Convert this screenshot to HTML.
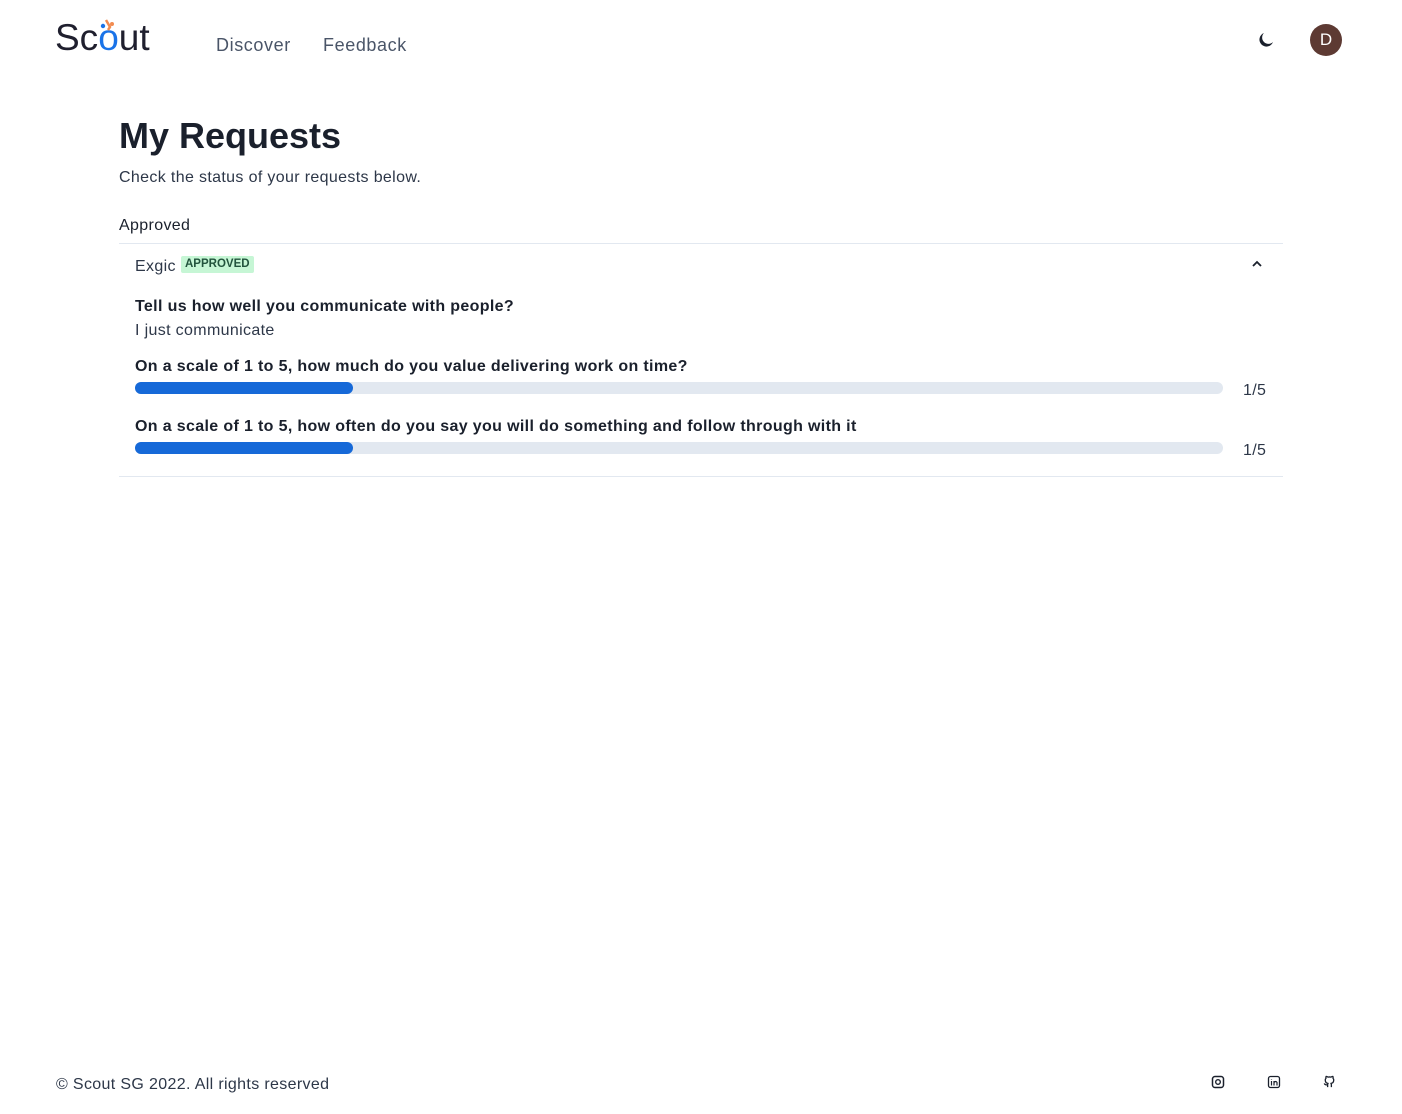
<!DOCTYPE html>
<html><head><meta charset="utf-8"><style>
*{box-sizing:border-box;margin:0;padding:0}
body{width:1402px;height:1114px;background:#fff;font-family:"Liberation Sans",sans-serif;color:#1a202c;position:relative;overflow:hidden;letter-spacing:0.35px}
.abs{position:absolute}
.nav{font-size:18px;color:#4a5568;top:35px;letter-spacing:0.6px}
.q{font-weight:bold;font-size:16px;color:#1a202c;left:135px;letter-spacing:0.35px}
.bar{left:135px;width:1088px;height:12px;background:#e2e8f0;border-radius:6px}
.bar div{width:218px;height:12px;background:#1669d8;border-radius:6px}
.val{left:1243px;font-size:16px;color:#2d3748}
</style></head><body>
<div class="abs" style="left:55px;top:17px;font-size:37px;color:#1f1f2e;letter-spacing:0px">Sc<span style="color:#1a73e8">o</span>ut</div>
<svg class="abs" style="left:96px;top:18px" width="26" height="26" viewBox="0 0 26 26"><circle cx="7" cy="8" r="2.2" fill="#1a73e8"/><path d="M10 2 L14 9 L12 12" stroke="#f28b50" stroke-width="2.5" fill="none"/><circle cx="16" cy="6" r="2" fill="#f28b50"/></svg>
<div class="abs nav" style="left:216px">Discover</div>
<div class="abs nav" style="left:323px">Feedback</div>
<svg class="abs" style="left:1257px;top:31px" width="18" height="18" viewBox="0 0 18 18"><path d="M7 2 A7 7 0 1 0 16 11 A6 6 0 0 1 7 2Z" fill="#1a202c"/></svg>
<div class="abs" style="left:1310px;top:24px;width:32px;height:32px;border-radius:50%;background:#5d3a33;color:#fff;font-size:17px;text-align:center;line-height:32px;letter-spacing:0">D</div>
<div class="abs" style="left:119px;top:115px;font-size:36px;font-weight:bold;color:#1a202c;letter-spacing:0">My Requests</div>
<div class="abs" style="left:119px;top:169px;font-size:16px;color:#2d3748">Check the status of your requests below.</div>
<div class="abs" style="left:119px;top:217px;font-size:16px;color:#1a202c">Approved</div>
<div class="abs" style="left:119px;top:243px;width:1164px;height:1px;background:#e2e8f0"></div>
<div class="abs" style="left:135px;top:258px;font-size:16px;color:#2d3748">Exgic</div>
<div class="abs" style="left:181px;top:256px;height:17px;padding:0 4px;background:#c6f6d5;color:#22543d;font-size:11.5px;font-weight:bold;line-height:17px;border-radius:2px;letter-spacing:0">APPROVED</div>
<svg class="abs" style="left:1251px;top:259px" width="12" height="10" viewBox="0 0 12 10"><path d="M2 7 L6 3 L10 7" stroke="#1a202c" stroke-width="1.8" fill="none"/></svg>
<div class="abs q" style="top:298px">Tell us how well you communicate with people?</div>
<div class="abs" style="left:135px;top:322px;font-size:16px;color:#2d3748">I just communicate</div>
<div class="abs q" style="top:358px">On a scale of 1 to 5, how much do you value delivering work on time?</div>
<div class="abs bar" style="top:382px"><div></div></div>
<div class="abs val" style="top:382px">1/5</div>
<div class="abs q" style="top:418px">On a scale of 1 to 5, how often do you say you will do something and follow through with it</div>
<div class="abs bar" style="top:442px"><div></div></div>
<div class="abs val" style="top:442px">1/5</div>
<div class="abs" style="left:119px;top:476px;width:1164px;height:1px;background:#e2e8f0"></div>
<div class="abs" style="left:56px;top:1076px;font-size:16px;color:#2d3748">© Scout SG 2022. All rights reserved</div>
<svg class="abs" style="left:1211px;top:1075px" width="14" height="14" viewBox="0 0 14 14"><rect x="1.5" y="1.5" width="11" height="11" rx="2.5" stroke="#1a202c" stroke-width="1.5" fill="none"/><circle cx="7" cy="7" r="2.3" stroke="#1a202c" stroke-width="1.4" fill="none"/></svg>
<svg class="abs" style="left:1267px;top:1075px" width="14" height="14" viewBox="0 0 14 14"><rect x="1.5" y="1.5" width="11" height="11" rx="2" stroke="#1a202c" stroke-width="1.3" fill="none"/><path d="M4.5 6v4.5M4.5 4v.5M7 10.5V6M7 7.5q2-2 3 0v3" stroke="#1a202c" stroke-width="1.2" fill="none"/></svg>
<svg class="abs" style="left:1322px;top:1074px" width="15" height="15" viewBox="0 0 16 16"><path d="M6 14v-2.5q-3 .5-3.5-1.5M10 14v-2.5q0-1-.5-1.5 3-.3 3-3.5 0-1.2-.8-2 .3-1-.1-2-1 0-2 .8-1.6-.4-3.2 0-1-.8-2-.8-.4 1-.1 2-.8.8-.8 2 0 3.2 3 3.5-.5.5-.5 1.5" stroke="#1a202c" stroke-width="1.4" fill="none" stroke-linejoin="round"/></svg>
</body></html>
